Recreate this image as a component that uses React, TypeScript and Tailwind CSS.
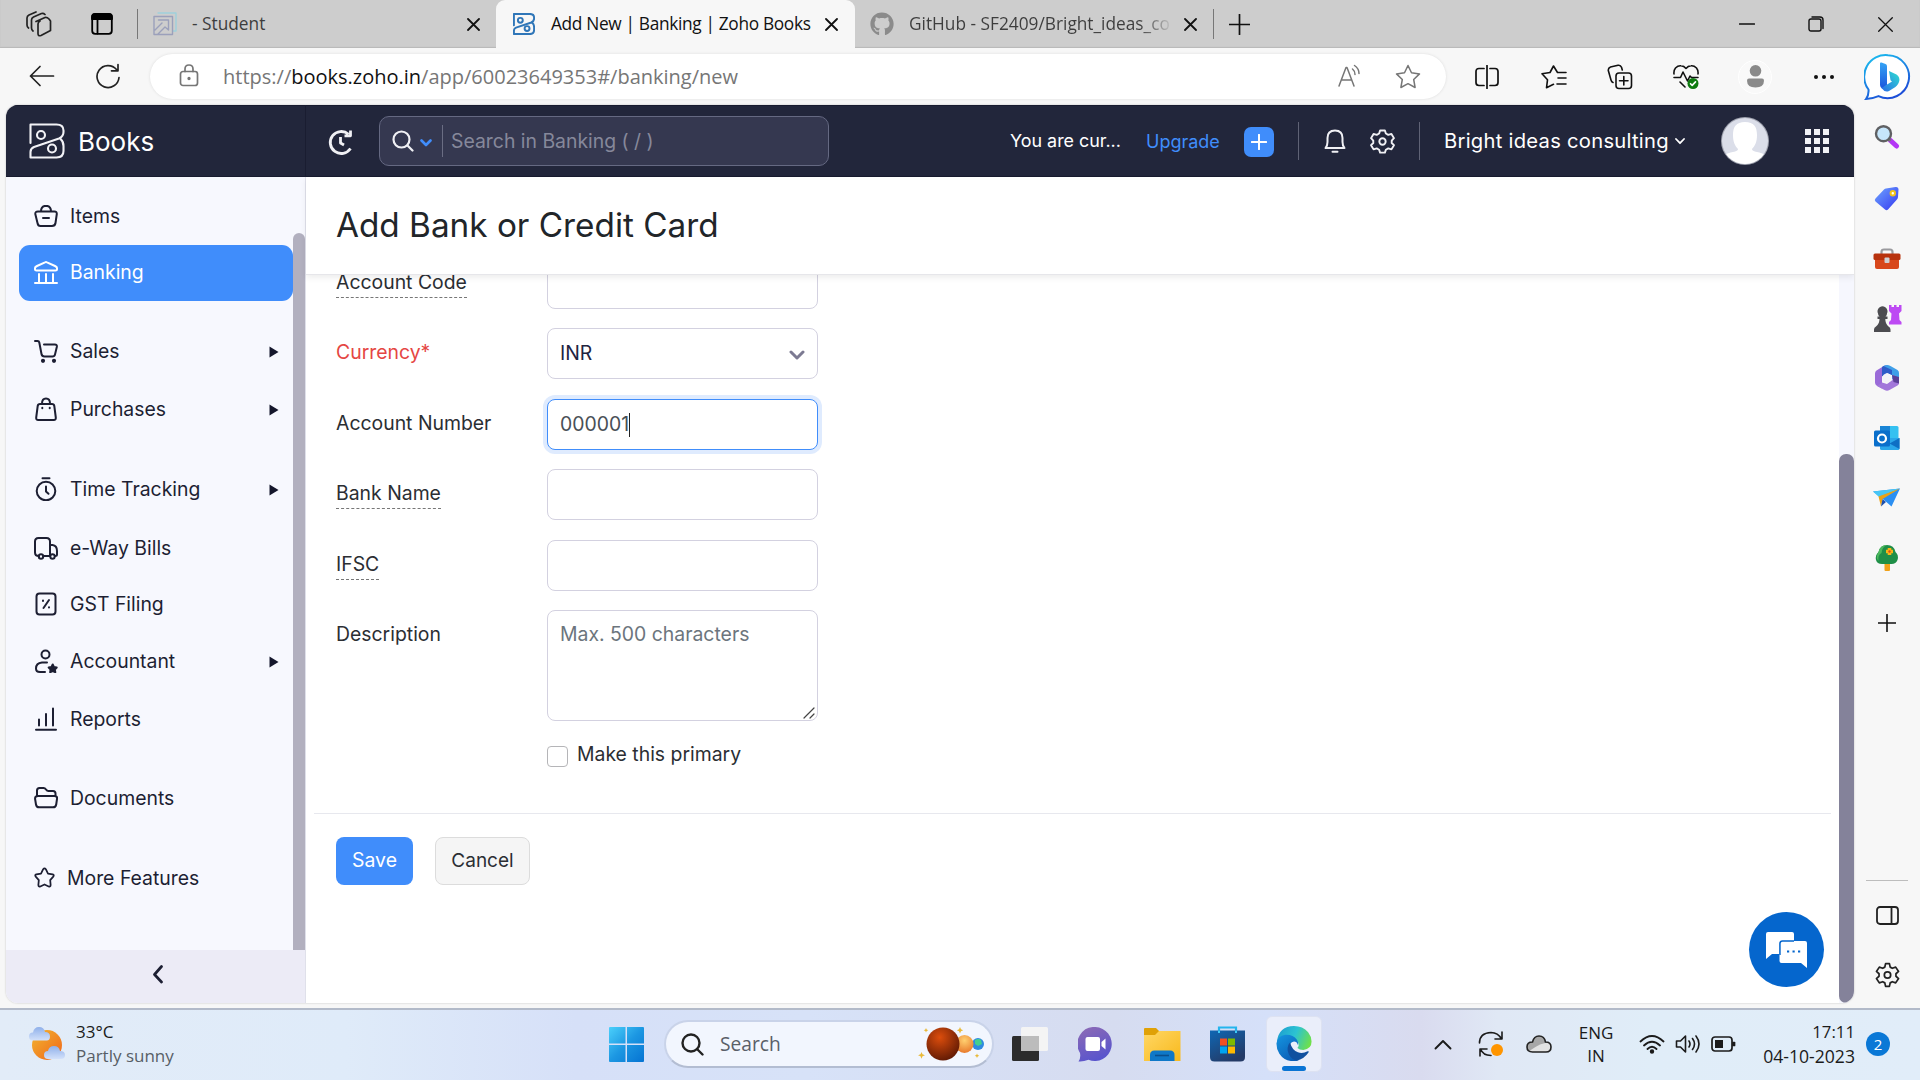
import React from "react";
import { FaGithub } from "react-icons/fa";

type Kids = { children?: React.ReactNode };

/** Stroke icon on a free view box. */
function Ic({
  w,
  h = w,
  vb,
  sw = 1.8,
  className = "",
  children,
}: Kids & { w: number; h?: number; vb?: string; sw?: number; className?: string }) {
  return (
    <svg
      width={w}
      height={h}
      viewBox={vb ?? `0 0 ${w} ${h}`}
      fill="none"
      stroke="currentColor"
      strokeWidth={sw}
      strokeLinecap="round"
      strokeLinejoin="round"
      className={"block shrink-0 " + className}
    >
      {children}
    </svg>
  );
}

function BooksLogo({ size, sw }: { size: number; sw: number }) {
  return (
    <Ic w={size} vb="0 0 36 36" sw={sw}>
      <path d="M1.5 20V1.5h26q7 0 7 6v1.5q0 4.500-4.500 6.500L5 24q-3.500 1.500-3.500 5v5.500h26q7 0 7-6.500v-5q0-4.500-3-7" />
      <circle cx="12" cy="12" r="4" />
      <circle cx="23" cy="25.500" r="4" />
    </Ic>
  );
}

function CloseX({ className = "" }: { className?: string }) {
  return (
    <Ic w={13} sw={1.8} className={className}>
      <path d="M1 1l11 11M12 1L1 12" />
    </Ic>
  );
}

function TabStrip() {
  return (
    <div className="flex h-12 shrink-0 items-center bg-[#cdcdcd] font-['Open_Sans','Noto_Sans',sans-serif] text-[17.3px] text-[#3d3d3d] shadow-[inset_0_-1px_1px_#b9b9b9]">
      <Ic w={26} className="ml-[26px] text-[#222]" sw={1.7}>
        <path d="M10 10.500l9-4q2-.5 4 1.500l1.500 2v9.500L15 24.500q-3 1-3-2v-9.500q0-2 2-3M7 20q-1.500-1-1.500-3V9q0-2 2-3l8-3.500q2-.5 3.500 1M2.500 17Q1 16 1 14V7q0-2 2-3L10 1" />
      </Ic>
      <Ic w={22} className="ml-[39px] text-black" sw={1.8}>
        <rect x="1.200" y="1.200" width="19.600" height="19.600" rx="3" />
        <path d="M1 6V4q0-3 3-3h14q3 0 3 3v2z" fill="currentColor" />
        <path d="M6.500 7v13.500" />
      </Ic>
      <div className="ml-6 h-[30px] w-px bg-[#777]" />
      <Ic w={24} className="ml-[15px]" sw={1.4}>
        <path d="M5 1h18v18h-3" stroke="#9fd0dc" />
        <path d="M1 4.500h18.500v18H1zM5.500 8h10v10l-3.500-3-7 7M9 11l-7 7" stroke="#9ba0bb" />
      </Ic>
      <span className="ml-[15px] w-[76px] whitespace-nowrap">- Student</span>
      <CloseX className="ml-[199px] text-[#111]" />
      <div className="ml-[16px] flex h-12 w-[359px] items-center rounded-t-[9px] bg-[#f7f7f7] text-[#111]">
        <div className="ml-[17px] text-[#2f76b8]">
          <BooksLogo size={22} sw={3.2} />
        </div>
        <span className="ml-4 w-[262px] whitespace-nowrap tracking-[-0.33px]">
          Add New | Banking | Zoho Books
        </span>
        <CloseX className="ml-[12px]" />
      </div>
      <FaGithub className="ml-[15px] shrink-0 text-[24px] text-[#8b8b8b]" />
      <span className="ml-[15px] w-[262px] overflow-hidden whitespace-nowrap bg-linear-to-r from-[#3d3d3d] from-88% to-[#c4c4c4] bg-clip-text text-transparent">
        GitHub - SF2409/Bright_ideas_co
      </span>
      <CloseX className="ml-[13px] text-[#111]" />
      <div className="ml-[16px] h-[30px] w-px bg-[#777]" />
      <Ic w={21} className="ml-[15px] text-[#111]" sw={1.700}>
        <path d="M10.500 .5v20M.5 10.500h20" />
      </Ic>
      <div className="ml-auto mr-[27px] flex items-center text-[#111]">
        <Ic w={16} sw={1.3}>
          <path d="M.5 8h15" />
        </Ic>
        <Ic w={16} className="ml-[53px]" sw={1.4}>
          <rect x="1" y="3" width="12" height="12" rx="2" />
          <path d="M4 1h8q3 0 3 3v8.500" />
        </Ic>
        <Ic w={15} className="ml-[54px]" sw={1.3}>
          <path d="M.7.7l13.600 13.600M14.300.7L.7 14.300" />
        </Ic>
      </div>
    </div>
  );
}

function Toolbar() {
  return (
    <div className="flex h-[57px] shrink-0 items-center text-[#222]">
      <Ic w={26} h={22} className="-mt-[2px] ml-[29px]" sw={1.7}>
        <path d="M24.500 11H1.500M11 1.500L1.500 11l9.500 9.500" />
      </Ic>
      <Ic w={26} className="-mt-[2px] ml-[40px]" sw={1.7}>
        <path d="M24 14.500A11 11 0 1 1 21.500 6.500M23 1.500v6.300h-6.500" />
      </Ic>
      <div className="ml-[29px] flex h-[45px] w-[1296px] items-center rounded-full bg-white text-[#767676] shadow-[0_0_3px_#dcdcdc]">
        <Ic w={20} h={24} className="-mt-[2px] ml-[29px]" sw={1.7}>
          <rect x="1.500" y="7.500" width="17" height="14" rx="2.500" />
          <path d="M6 7.500V5q0-4 4-4t4 4v2.500" />
          <circle cx="10" cy="14.500" r=".8" fill="currentColor" />
        </Ic>
        <span className="ml-[24px] whitespace-nowrap font-['Open_Sans','Noto_Sans',sans-serif] text-[20px]">
          https://<span className="text-[#111]">books.zoho.in</span>/app/60023649353#/banking/new
        </span>
        <Ic w={24} className="-mt-[2px] ml-auto" sw={1.500}>
          <path d="M1 22L8 3.500h1L16 22M3.500 16h10M14.500 5q2.500 2 2.500 5.500M16.500 1.500q4.500 3 4.500 8" />
        </Ic>
        <Ic w={26} vb="0 0 26 26" className="ml-[33px] mr-[25px]" sw={1.500}>
          <path d="M13 1.500l3.500 7.300 8 1.100-5.800 5.600 1.400 8L13 19.700l-7.100 3.800 1.400-8L1.500 9.900l8-1.100z" />
        </Ic>
      </div>
      <Ic w={24} className="ml-[29px] text-[#111]" sw={1.700}>
        <path d="M12 .5v23M9 3.500H4q-3 0-3 3v11q0 3 3 3h5M15 3.500h5q3 0 3 3v11q0 3-3 3h-5" />
      </Ic>
      <Ic w={26} h={24} className="ml-[42px] text-[#111]" sw={1.600}>
        <path d="M25 7.500h-8.500L12.500 1 9 7.500l-8 1.300 5.500 6-1 8 7-3.500M17 13h8M16 19h9" />
      </Ic>
      <Ic w={26} className="ml-[40px] text-[#111]" sw={1.600}>
        <rect x="9" y="9" width="15.500" height="15.500" rx="3" />
        <path d="M16.800 12.500v8.500M12.500 16.800H21M6 18.500Q4.500 18 4 16L1.300 6.500Q1 4 3.500 3L11 1.300q2.500-.5 3.500 2L15.300 6" />
      </Ic>
      <Ic w={27} h={26} className="ml-[40px] text-[#111]" sw={1.600}>
        <path d="M1 10q-.5-3.500 1.500-6Q5 1.500 8 1.800 11 2 13 4.500 15 2 18 1.800q3-.3 5.500 2.200 2 2.500 1.500 6M1 13.500h6.500L10 8l4.500 9 2.500-5 1.500 1.500H25M7 18l5 5" />
        <circle cx="20" cy="19.500" r="5.500" fill="#0f7b10" stroke="none" />
        <path d="M17.500 19.700l1.700 1.700 3.300-3.500" stroke="#fff" />
      </Ic>
      <div className="ml-[38px] flex size-[34px] items-center justify-center rounded-full border border-white bg-[#f9f9f9]">
        <svg width="19" height="23" viewBox="0 0 19 23" fill="#8a8a8a">
          <circle cx="9.500" cy="5.800" r="5.800" />
          <path d="M1 15.500q0-2 2-2h13q2 0 2 2 0 7-8.500 7T1 15.500z" />
        </svg>
      </div>
      <svg width="22" height="6" viewBox="0 0 22 6" className="ml-[41px]" fill="#111">
        <circle cx="3" cy="3" r="2" />
        <circle cx="11" cy="3" r="2" />
        <circle cx="19" cy="3" r="2" />
      </svg>
    </div>
  );
}

function AppHeader() {
  return (
    <div className="flex h-[72px] shrink-0 items-center bg-[#22263b] text-white shadow-[inset_0_-1px_0_#181b2f,inset_0_1px_0_#181b2f]">
      <div className="flex h-full w-[300px] items-center border-r border-[#1a1d31] pl-[23px] text-[#f2f2f6]">
        <BooksLogo size={36} sw={2.1} />
        <span className="ml-[13px] mt-px font-[Inter,sans-serif] text-[26px] text-white">Books</span>
      </div>
      <Ic w={28} className="ml-[21px] mt-px text-[#f0f0f4]" sw={2.8}>
        <path d="M23.500 20.500A11 11 0 1 1 21.500 6.200M23.500 2.500v5.300h-6M13.500 9v6l3.500 2" strokeLinecap="butt" />
      </Ic>
      <div className="ml-[24px] flex h-[50px] w-[450px] items-center rounded-[10px] border border-[#656982] bg-[#353850]">
        <Ic w={22} className="ml-[12px] text-[#f0f0f4]" sw={2.2}>
          <circle cx="9.500" cy="9.500" r="8" />
          <path d="M15.500 15.500l5 5" />
        </Ic>
        <Ic w={12} h={8} className="ml-[6px] mt-[3px] text-[#408dfb]" sw={2.6}>
          <path d="M1.500 1.500L6 6l4.500-4.500" />
        </Ic>
        <div className="ml-[10px] h-8 w-px bg-[#6a6d83]" />
        <span className="ml-[8px] mt-px whitespace-nowrap font-[Inter,sans-serif] text-[19.400px] text-[#86889b]">
          Search in Banking ( / )
        </span>
      </div>
      <span className="ml-[181px] w-[111px] whitespace-nowrap font-[Inter,sans-serif] text-[17.900px]">
        You are cur...
      </span>
      <span className="ml-[25px] w-[74px] font-[Inter,sans-serif] text-[18px] text-[#408dfb]">Upgrade</span>
      <div className="ml-[24px] mt-px flex size-[30px] items-center justify-center rounded-[7px] bg-[#408dfb]">
        <Ic w={16} sw={2}>
          <path d="M8 .8v14.400M.8 8h14.400" />
        </Ic>
      </div>
      <div className="ml-[24px] h-[38px] w-px bg-[#5f6275]" />
      <Ic w={22} h={24} className="ml-[25px] text-[#f0f0f4]" sw={2}>
        <path d="M1.500 19h19Q18.500 16.500 18.500 13V9q0-7.500-7.500-7.500T3.500 9v4q0 3.500-2 6zM8.500 22.800h5" />
      </Ic>
      <Ic w={25} vb="0 0 26 26" className="ml-[24px] text-[#f0f0f4]" sw={2}>
        <path d="M10.500 1.500h5l1 3.200 2.500 1.400 3.300-1 2.600 4.400L22.600 12v2.600l2.300 2.200-2.600 4.400-3.300-1-2.500 1.400-1 3h-5l-1-3L7 20.200l-3.300 1-2.600-4.400 2.300-2.200V12L1.100 9.500l2.600-4.400 3.300 1 2.500-1.400z" />
        <circle cx="13" cy="13" r="3.300" />
      </Ic>
      <div className="ml-[24px] h-[38px] w-px bg-[#5f6275]" />
      <span className="ml-[24px] w-[227px] whitespace-nowrap font-[Inter,sans-serif] text-[20.200px] tracking-[0.27px]">
        Bright ideas consulting
      </span>
      <Ic w={10} h={7} className="ml-[4px]" sw={1.8}>
        <path d="M1 1l4 4.200L9 1" />
      </Ic>
      <svg width="48" height="48" viewBox="0 0 48 48" className="ml-[36px] shrink-0">
        <defs>
          <clipPath id="avatarClip">
            <circle cx="24" cy="24" r="23" />
          </clipPath>
        </defs>
        <circle cx="24" cy="24" r="24" fill="#9fa2ae" />
        <g clipPath="url(#avatarClip)">
          <rect width="48" height="48" fill="#dbdee9" />
          <path d="M24 5c9 0 12 5 12 13 0 7-2 11-5 14 0 4 12 2 14 8l-3 8H6L3 40c2-6 14-4 14-8-3-3-5-7-5-14 0-8 3-13 12-13z" fill="#fff" />
        </g>
      </svg>
      <div className="ml-[36px] grid grid-cols-3 gap-x-[3px] gap-y-[3px]">
        {Array.from({ length: 9 }, (_, i) => (
          <div key={i} className="size-[6px] bg-[#f2f2f6]" />
        ))}
      </div>
    </div>
  );
}

const navIcons: Record<string, React.ReactNode> = {
  Items: (
    <path d="M4 7.500h16.500q2.500 0 2.300 2.500l-1.300 9q-.5 3-3.500 3H6.500Q4 22 3.500 19L1.300 10Q1 7.500 4 7.500zM7 7.500q0-4.500 3.500-5.500h3q3.500 1 3.500 5.500M9 14h6" />
  ),
  Banking: (
    <path d="M1 9.500V8q0-1 2-2l8-3.700q1-.5 2 0L21 6q2 1 2 2v1.500q0 1-1.500 1h-19Q1 10.500 1 9.500zM5 14v8M12 14v8M19 14v8M1 23h22" />
  ),
  Sales: (
    <>
      <path d="M1 2h2.500q1.500 0 1.800 1.500L7.500 15q.5 2.500 3 2.500h8q2 0 2.500-2l1.800-7.500q.5-2.500-2-2.500H10" />
      <circle cx="9" cy="21.800" r="1.100" fill="currentColor" />
      <circle cx="20" cy="21.800" r="1.100" fill="currentColor" />
    </>
  ),
  Purchases: (
    <path d="M6 7h12q2 0 2.300 2l1.500 11.500q.2 2.500-2 2.500H4.200q-2.200 0-2-2.500L3.700 9Q4 7 6 7zM8 6.500Q8 1.500 12 1.500t4 5M8.300 10.800v.4M15.700 10.800v.4" />
  ),
  "Time Tracking": (
    <>
      <circle cx="12" cy="14" r="9.300" />
      <path d="M8.500 1.300h7M12 9.500v5l2.500 2.300" />
    </>
  ),
  "e-Way Bills": (
    <>
      <path d="M5 20q-4 0-4-3.500v-11Q1 2 4.500 2h8Q16 2 16 5.500V20H9M16 9h2.500q4.500.5 4.500 6v3.500q0 1.500-2 1.500" />
      <circle cx="7" cy="20.500" r="2.200" />
      <circle cx="18.500" cy="20.500" r="2.200" />
    </>
  ),
  "GST Filing": (
    <path d="M5.500 1.500h13q3 0 3 3v15q0 3-3 3h-13q-3 0-3-3v-15q0-3 3-3zM15 8l-5.500 8M9 8.500v.4M15 15.200v.4" />
  ),
  Accountant: (
    <>
      <circle cx="11.500" cy="5.500" r="4" />
      <path d="M13 13.500H8q-6 .5-6 6 0 3.500 4 3.500h5" />
      <path
        d="M18.700 15.500l1.300 2.600 2.700.4-1.900 2 .5 2.700-2.600-1.200-2.500 1.200.4-2.700-1.900-2 2.700-.4z"
        fill="currentColor"
      />
    </>
  ),
  Reports: <path d="M5 12.500v6M12 7v11.500M19 1.500v17M2 22.800h20" />,
  Documents: (
    <path d="M3 10V4.500Q3 2 5.500 2h4q1.500 0 2.500 1.500t2.500 1.500H19q2.500 0 2.500 2.500V10M4 10h16.500q3 0 2.500 3l-.8 5.500q-.4 2.800-3.200 2.800H5.200q-2.800 0-3.200-2.800L1.100 13Q.8 10 4 10z" />
  ),
};

const nav: { label: string; gap: string; arrow?: boolean; active?: boolean }[] = [
  { label: "Items", gap: "mt-0" },
  { label: "Banking", gap: "mt-0", active: true },
  { label: "Sales", gap: "mt-[23px]", arrow: true },
  { label: "Purchases", gap: "mt-[2px]", arrow: true },
  { label: "Time Tracking", gap: "mt-[24px]", arrow: true },
  { label: "e-Way Bills", gap: "mt-[3px]" },
  { label: "GST Filing", gap: "mt-0" },
  { label: "Accountant", gap: "mt-px", arrow: true },
  { label: "Reports", gap: "mt-[2px]" },
  { label: "Documents", gap: "mt-[23px]" },
];

function Sidebar() {
  return (
    <div className="flex w-[300px] shrink-0 flex-col border-r border-[#dfe0ea] bg-[#f7f8fe] font-[Inter,sans-serif] text-[19.400px] text-[#1d1f33]">
      <div className="flex h-[773px] shrink-0">
        <div className="flex flex-1 flex-col pl-[13px] pt-[12px]">
          {nav.map((n) => (
            <div
              key={n.label}
              className={
                "flex h-14 shrink-0 items-center rounded-[11px] pl-[15px] pr-[14px] " +
                n.gap +
                (n.active ? " bg-[#408dfb] text-white" : "")
              }
            >
              <Ic w={24} sw={2} className="-mt-[2px]">
                {navIcons[n.label]}
              </Ic>
              <span className="ml-[12px] flex-1 whitespace-nowrap">{n.label}</span>
              {n.arrow && (
                <svg width="10" height="12" viewBox="0 0 10 12" fill="#15172c">
                  <path d="M.5.5L9.500 6 .5 11.500z" />
                </svg>
              )}
            </div>
          ))}
          <div className="mt-6 flex h-14 shrink-0 items-center pl-[15px]">
            <Ic w={21} vb="0 0 24 24" className="-mt-[3px]" sw={2}>
              <path d="M10.500 2.500q1.500-2 3 0L16 7.500l5.300 1q2.200.7.700 2.500l-3.500 4 .5 5.500q0 2.500-2.200 1.700L12 20l-4.800 2.200Q5 23 5 20.500L5.500 15 2 11Q.5 9.200 2.700 8.500l5.300-1z" />
            </Ic>
            <span className="ml-[12px] whitespace-nowrap">More Features</span>
          </div>
        </div>
        <div className="flex w-3 flex-col pt-[56px]">
          <div className="flex-1 rounded-t-[6px] bg-[#b2b0bf]" />
        </div>
      </div>
      <div className="flex flex-1 items-center justify-center bg-[#ecebf6] pb-[4px] pl-[5px]">
        <Ic w={12} h={19} sw={2.7}>
          <path d="M9.500 1.500L2.500 9.500l7 7.500" />
        </Ic>
      </div>
    </div>
  );
}

function Field({
  label,
  gap,
  hint = false,
  required = false,
  tall = false,
  children,
}: Kids & { label: string; gap: string; hint?: boolean; required?: boolean; tall?: boolean }) {
  return (
    <div className={"flex shrink-0 " + gap + (tall ? " h-[111px]" : " h-[51px]")}>
      <div className="w-[211px] pt-[10px]">
        <span
          className={
            "inline-block whitespace-nowrap leading-[29px] " +
            (hint ? "border-b border-dashed border-[#777] " : "") +
            (required ? "text-[#e54643]" : "")
          }
        >
          {label}
        </span>
      </div>
      {children}
    </div>
  );
}

const box = "flex w-[271px] items-center rounded-[8px] border border-[#d3d1e0] bg-white px-[12px]";

function BankForm() {
  return (
    <div className="flex min-w-0 flex-1 flex-col bg-white font-[Inter,sans-serif] text-[19.400px] text-[#2b2e33]">
      <div className="z-10 flex h-[98px] shrink-0 items-center border-b border-[#e6e6ea] bg-white pl-[30px] shadow-[0_3px_6px_rgba(0,0,0,0.07)]">
        <h1 className="whitespace-nowrap text-[33.300px] font-normal text-[#212529]">
          Add Bank or Credit Card
        </h1>
      </div>
      <div className="flex min-h-0 flex-1 overflow-hidden">
        <div className="flex flex-1 flex-col">
          <div className="flex flex-col pl-[30px]">
            <Field label="Account Code" hint gap="-mt-[17px]">
              <div className={box} />
            </Field>
            <Field label="Currency*" required gap="mt-[19px]">
              <div className={box + " justify-between text-[#22243f]"}>
                <span className="mt-px">INR</span>
                <Ic w={16} h={10} sw={3} className="mt-[3px] text-[#7c7a92]">
                  <path d="M2 2l6 6 6-6" />
                </Ic>
              </div>
            </Field>
            <Field label="Account Number" gap="mt-[20px]">
              <div className="flex w-[271px] items-center rounded-[8px] border border-[#408dfb] bg-white px-[12px] text-[#495057] shadow-[0_0_0_4px_#dfebfe]">
                <span>000001</span>
                <span className="h-6 w-px bg-[#222]" />
              </div>
            </Field>
            <Field label="Bank Name" hint gap="mt-[19px]">
              <div className={box} />
            </Field>
            <Field label="IFSC" hint gap="mt-[20px]">
              <div className={box} />
            </Field>
            <Field label="Description" tall gap="mt-[19px]">
              <div className="flex w-[271px] justify-between rounded-[8px] border border-[#d3d1e0] pl-[12px] pr-[2px] pt-[9px] text-[#6c757d]">
                <span className="whitespace-nowrap leading-[28px]">Max. 500 characters</span>
                <Ic w={12} className="mb-[1px] self-end text-[#444]" sw={1.200}>
                  <path d="M1 11L11 1M7 11l4-4" />
                </Ic>
              </div>
            </Field>
            <div className="mt-[25px] flex h-[21px] items-center pl-[211px]">
              <div className="size-[21px] rounded-[4px] border border-[#b5b5b8] bg-white" />
              <span className="-mt-[3px] ml-[9px] whitespace-nowrap">Make this primary</span>
            </div>
          </div>
          <div className="ml-2 mr-2 mt-[46px] h-px bg-[#e7e8ee]" />
          <div className="mt-[23px] flex gap-[22px] pl-[30px]">
            <button className="h-12 w-[77px] rounded-[8px] bg-[#408dfb] text-white">Save</button>
            <button className="h-12 w-[95px] rounded-[8px] border border-[#dcdcdc] bg-[#f5f5f5] text-[19px]">
              Cancel
            </button>
          </div>
          <div className="mr-[15px] mt-[27px] flex size-[75px] items-center justify-center self-end rounded-full bg-[#0566cd]">
            <svg width="42" height="38" viewBox="0 0 42 38">
              <path d="M2 1h24q2 0 2 2v8H15q-2 0-2 2v10H6l-6 5V3q0-2 2-2z" fill="#fff" />
              <path d="M15.500 10H39q2 0 2 2v25l-6-5H15.500q-2 0-2-2V12q0-2 2-2z" fill="#fff" />
              <path d="M14 24V12.500q0-2.500 2.500-2.500H28" stroke="#0566cd" strokeWidth="1.400" fill="none" />
              <path d="M21 20.500h2.200M26.500 20.500h2.200M32 20.500h2.200" stroke="#0566cd" strokeWidth="2.200" />
            </svg>
          </div>
        </div>
        <div className="flex w-[15px] flex-col bg-[#f6f7fe] pt-[179px]">
          <div className="flex-1 rounded-[7px] bg-[#84829a]" />
        </div>
      </div>
    </div>
  );
}

function BingLogo() {
  return (
    <svg width="47" height="48" viewBox="0 0 47 48" className="ml-px mt-[6px] shrink-0">
      <defs>
        <linearGradient id="bingRing" x1="0" y1="0" x2=".5" y2="1">
          <stop offset="0" stopColor="#1bc4f0" />
          <stop offset="1" stopColor="#1c4fd8" />
        </linearGradient>
        <linearGradient id="bingB" x1="0" y1="0" x2="0" y2="1">
          <stop offset="0" stopColor="#35a4f5" />
          <stop offset="1" stopColor="#1a53dc" />
        </linearGradient>
        <linearGradient id="bingC" x1="0" y1="1" x2="1" y2="0">
          <stop offset="0" stopColor="#2a6be8" />
          <stop offset="1" stopColor="#2ee0d0" />
        </linearGradient>
      </defs>
      <path d="M24 1.200a21.500 21.500 0 1 1-9.500 41Q8 45 2 45q3-4 2.500-9.500A21.500 21.500 0 0 1 24 1.200z" fill="#fff" stroke="url(#bingRing)" strokeWidth="2" />
      <path d="M16 9.500q0-1.500 1.500-1l4 1.500q1.500.6 1.500 2.200v18.500L18.500 35q-2.500-1.500-2.500-4z" fill="url(#bingB)" />
      <path d="M25 17l7.500 3.500Q36.500 23 35 28q-1.500 4-6 6.500l-4 2.500q-4 2-7.500-3L28 27.500l-1.500-1.300z" fill="url(#bingC)" />
    </svg>
  );
}

function EdgeRail() {
  return (
    <div className="flex w-[66px] shrink-0 flex-col items-center">
      <BingLogo />
      <svg width="26" height="24" viewBox="0 0 26 24" className="mt-[23px] shrink-0">
        <path d="M16.500 15.500l6 5.500" stroke="#b437f5" strokeWidth="5" strokeLinecap="round" />
        <path d="M14 13.500l2.500 2.300" stroke="#777" strokeWidth="3" />
        <circle cx="9.500" cy="8.700" r="7.500" fill="#c6e6fb" stroke="#5f6063" strokeWidth="2.400" />
      </svg>
      <svg width="26" height="26" viewBox="0 0 26 26" className="mt-[37px] shrink-0">
        <defs>
          <linearGradient id="tag" x1="0" y1="0" x2="1" y2="1">
            <stop offset="0" stopColor="#6fa6ff" />
            <stop offset="1" stopColor="#3437f0" />
          </linearGradient>
        </defs>
        <path d="M12 2.500l9.500-1.500q3-.3 3 2.500L24 11q0 1.500-1.500 3L14 23.500q-1.500 1.500-3 0L1.500 15.500q-1.500-1.500 0-3l8.500-9q1-1 2-1z" fill="url(#tag)" />
        <circle cx="18.800" cy="7.200" r="2.200" fill="#fff" stroke="#f3c318" strokeWidth="2" />
      </svg>
      <svg width="28" height="22" viewBox="0 0 28 22" className="mt-[36px] shrink-0">
        <path d="M8.500 7V4q0-2.500 2.500-2.500h6q2.500 0 2.500 2.500v3" fill="none" stroke="#9a9a9e" strokeWidth="2.200" />
        <rect x="2" y="7" width="24" height="14" rx="2" fill="#d8481c" />
        <rect x=".5" y="5.500" width="27" height="6.500" rx="1.500" fill="#b8320d" />
        <rect x="11.500" y="9.500" width="5" height="5.500" rx="1" fill="#cfd0d4" />
      </svg>
      <svg width="30" height="29" viewBox="0 0 30 29" className="mt-[34px] shrink-0">
        <path d="M17 1h2.500v2H22V1h2.500v2H27V1h2.500v6l-2.500 2.500.5 6.500 2 2v2.500H17V18l2-2 .5-6.500L17 7z" fill="#bd4af3" />
        <path d="M6 9.500a5 5 0 1 1 9 0q0 2-1.500 3h2v2.500h-2.200q0 5 3.200 7.500 2 1 2 3v2.500H2V25.500q0-2 2-3Q7.500 20 7.500 15H5.500v-2.500h2Q6 11.500 6 9.500z" fill="#4c4c50" />
      </svg>
      <svg width="26" height="28" viewBox="0 0 26 28" className="mt-[31px] shrink-0">
        <path d="M9 2.500L2.500 6.500Q1 7.500 1 9.500v9q0 2 1.500 3L8 24.500V10L14 7V1.500q-2.500-1-5 1z" fill="#9a6bd8" />
        <path d="M9.500 2Q13 0 16.500 2l7 4q1.500 1 1.500 3v9.500L18 15v-4L9 6.500z" fill="#3f9fe8" />
        <path d="M9.500 2L8 3v9.500L13 9l5 2V6z" fill="#2e5cc8" />
        <path d="M25 17v2q0 1.500-1.500 2.500l-8 4.500Q13 27.500 10.500 26L3 22l5-3.500 5 1.500 5.500-4 .5-5.500z" fill="#a277da" />
        <path d="M18 11l7 2v6.500l-5.500-1.500z" fill="#5b3f98" />
        <circle cx="13" cy="14" r="4.600" fill="#f3f3f7" />
      </svg>
      <svg width="26" height="24" viewBox="0 0 26 24" className="mt-[34px] shrink-0">
        <rect x="6" y="0" width="18.500" height="13" rx="1.500" fill="#35c1f1" />
        <rect x="6" y="0" width="10" height="7" fill="#1a85d6" />
        <path d="M6 12h19.500v10.500q0 1.500-1.500 1.500H7.500Q6 24 6 22.500z" fill="#2aa7ea" />
        <path d="M25.500 12v11L15.500 17.500z" fill="#0e6fc4" />
        <rect x="0" y="4.500" width="16" height="16" rx="1.500" fill="#0a6fcb" />
        <circle cx="8" cy="12.500" r="4" fill="none" stroke="#fff" strokeWidth="2.200" />
      </svg>
      <svg width="28" height="20" viewBox="0 0 28 20" className="mt-[38px] shrink-0">
        <path d="M0 3.500L27 .5 18.500 18.500l-8-7z" fill="#2b8ff2" />
        <path d="M0 3.500L27 .5 6 9z" fill="#48c6f5" />
        <path d="M27 .5L9.500 11 8 18.500 5.500 8.500z" fill="#eba217" />
        <path d="M9.500 11l3.500 3-5 4.500z" fill="#1c4fae" />
      </svg>
      <svg width="24" height="28" viewBox="0 0 24 28" className="mt-[36px] shrink-0">
        <rect x="9.500" y="18" width="5.500" height="9" rx="1" fill="#f0a21a" />
        <path d="M12 1q7 0 8.500 7 3.500 3 2 8-1.500 4-6 4H7q-5 0-6-4-1-5 2.500-8Q5 1 12 1z" fill="#1f8f48" />
        <path d="M12 1Q7 3 6.500 9q-4 2-3 8Q0 14 3.500 8 5 1 12 1z" fill="#4cb85c" />
        <path d="M14.500 4v7M11 7.500h7" stroke="#f8b417" strokeWidth="3.600" />
        <circle cx="14.500" cy="7.500" r="1.200" fill="#d8501c" />
      </svg>
      <Ic w={18} className="mt-[42px] text-[#111]" sw={1.600}>
        <path d="M9 .5v17M.5 9h17" />
      </Ic>
      <div className="mt-[248px] h-px w-[42px] bg-[#bdbdbd]" />
      <Ic w={23} h={19} className="mt-[25px] text-[#222]" sw={1.800}>
        <rect x="1" y="1" width="21" height="17" rx="3" />
        <path d="M15.500 1v17" />
      </Ic>
      <Ic w={25} h={26} vb="0 0 26 26" className="mt-[37px] text-[#222]" sw={1.800}>
        <path d="M11 1.200h4l.8 3.600 2.200 1.200 3.500-1.200 3 4.500-2.700 2.400v2.600l2.700 2.400-3 4.500-3.500-1.200-2.200 1.200-.8 3.600h-4l-.8-3.600L8 20l-3.500 1.200-3-4.500 2.700-2.400v-2.600L1.500 9.300l3-4.500L8 6l2.200-1.200z" />
        <circle cx="13" cy="13" r="3.300" />
      </Ic>
    </div>
  );
}

function EdgeLogo() {
  return (
    <svg width="36" height="36" viewBox="0 0 36 36">
      <defs>
        <linearGradient id="edgeTop" x1="0" y1=".3" x2="1" y2=".6">
          <stop offset="0" stopColor="#1d9fd0" />
          <stop offset=".5" stopColor="#2cc3d2" />
          <stop offset="1" stopColor="#6fe04a" />
        </linearGradient>
        <linearGradient id="edgeLeft" x1="0" y1="0" x2=".6" y2="1">
          <stop offset="0" stopColor="#1596e0" />
          <stop offset="1" stopColor="#0b5fb8" />
        </linearGradient>
      </defs>
      <path d="M.5 16Q2.500 0 18 0q9 0 14.500 6.500Q36 11 36 16q0 8-8.500 8.500-4 0-6-2 2-2 1-5-2-5-8.500-6Q6 11 .5 16z" fill="url(#edgeTop)" />
      <path d="M0 18q1-8 9-9 8-.5 12 5 2 3 1 5.500-1-3.500-4-3.500-5 1-5 7.500 0 9 10 11.500-3 1-6 1Q8 36 3 28.500 0 24 0 18z" fill="url(#edgeLeft)" />
      <path d="M14 17q-3 3-2.500 8 1.500 8 9 10.700 8-1.700 12.500-8.700.5-1.500-1-1-5 2.500-10 1-6-2-8-10z" fill="#10509f" />
    </svg>
  );
}

function Taskbar() {
  return (
    <div className="flex h-[72px] shrink-0 items-center border-t-2 border-[#b2bac9] bg-[linear-gradient(90deg,#e2ecf8_0%,#dfebf9_18%,#d6e0f8_30%,#d7e2f8_42%,#d6dcf0_58%,#d5e0f9_66%,#d9dbef_74%,#e0e8f5_78%,#e0edf8_86%,#e1edf9_100%)] pb-[2px] font-['Open_Sans','Noto_Sans',sans-serif] text-[17px] text-[#1b1b1b]">
      <svg width="38" height="36" viewBox="0 0 38 36" className="ml-[28px] shrink-0">
        <defs>
          <linearGradient id="sun" x1="0" y1="0" x2="1" y2="1">
            <stop offset="0" stopColor="#f2b630" />
            <stop offset="1" stopColor="#f0641a" />
          </linearGradient>
          <linearGradient id="cloud" x1="0" y1="0" x2="0" y2="1">
            <stop offset="0" stopColor="#8fb0ea" />
            <stop offset="1" stopColor="#d3e1fa" />
          </linearGradient>
        </defs>
        <circle cx="19" cy="19" r="15" fill="url(#sun)" />
        <path d="M5 14.500q-4 0-4-4t4-4Q6 1 11 1t6 5q5 0 5 4.500t-4 4z" fill="url(#cloud)" />
        <path d="M20 33q-4 0-4-4t4-4q1-5 6-5t6 5q5 0 5 4t-4 4z" fill="url(#cloud)" />
      </svg>
      <div className="ml-[10px] flex w-[104px] flex-col whitespace-nowrap leading-6">
        <span>33°C</span>
        <span className="text-[#585e66]">Partly sunny</span>
      </div>
      <svg width="35" height="35" viewBox="0 0 35 35" className="ml-[429px] shrink-0">
        <defs>
          <linearGradient id="win" x1="0" y1="0" x2="1" y2="1">
            <stop offset="0" stopColor="#4bd0fb" />
            <stop offset=".5" stopColor="#1c97e2" />
            <stop offset="1" stopColor="#0573d2" />
          </linearGradient>
        </defs>
        <path d="M1 0h15.500v16.500H0V1q0-1 1-1zM18 0h16q1 0 1 1v15.500H18zM0 18h16.500v17H1q-1 0-1-1zM18 18h17v16q0 1-1 1H18z" fill="url(#win)" />
      </svg>
      <div className="ml-[20px] flex h-[48px] w-[330px] items-center rounded-full border-2 border-b-[#b3bdd2] border-[#c9d3e9] bg-[#f2f6fe]">
        <Ic w={23} className="ml-[15px] text-[#222]" sw={2.400}>
          <circle cx="10" cy="10" r="8.500" />
          <path d="M16 16l5.500 5.500" />
        </Ic>
        <span className="ml-[16px] text-[19.200px] text-[#5a5f68]">Search</span>
        <svg width="67" height="36" viewBox="0 0 67 36" className="ml-auto mr-[8px]">
          <defs>
            <radialGradient id="mars" cx=".4" cy=".3" r=".75">
              <stop offset="0" stopColor="#dc4d0c" />
              <stop offset="1" stopColor="#5c1804" />
            </radialGradient>
            <radialGradient id="venus" cx=".5" cy=".3" r=".7">
              <stop offset="0" stopColor="#ffd070" />
              <stop offset="1" stopColor="#e87a2c" />
            </radialGradient>
          </defs>
          <circle cx="61" cy="18" r="6" fill="#2e8ae0" />
          <path d="M58 14q4-2 6 0l1 4-4 2-3-2z" fill="#43cf8e" />
          <circle cx="47.500" cy="18" r="9" fill="url(#venus)" />
          <circle cx="26" cy="18" r="16.500" fill="url(#mars)" />
          <path d="M43 1l1 2.200 2.200 1-2.200 1L43 7.400l-1-2.200-2.200-1 2.200-1zM4.500 26l1 2.200 2.500 1-2.500 1-1 2.500-1-2.500L1 29.200l2.500-1zM9 2l.7 1.600 1.600.7-1.600.7L9 6.600 8.300 5l-1.600-.7 1.600-.7zM60 27.500l.7 1.600 1.600.7-1.600.7-.7 1.600-.7-1.600-1.600-.7 1.600-.7z" fill="#e9ba3a" />
        </svg>
      </div>
      <svg width="36" height="36" viewBox="0 0 36 36" className="ml-[18px] shrink-0">
        <rect x="0" y="10" width="27" height="25" rx="1.500" fill="#2c2c2c" />
        <rect x="9" y="1" width="27" height="24" rx="1.500" fill="#f4f4f4" />
        <path d="M9 10h18v15H9z" fill="#bcbcbc" />
      </svg>
      <svg width="35" height="35" viewBox="0 0 35 35" className="ml-[30px] shrink-0">
        <defs>
          <linearGradient id="chat" x1="0" y1="0" x2=".4" y2="1">
            <stop offset="0" stopColor="#8f6bb4" />
            <stop offset="1" stopColor="#5a55cc" />
          </linearGradient>
        </defs>
        <path d="M17.500 0a17 17 0 1 1-7 32.800Q5 35 .5 34.500 3 31 2 26A17 17 0 0 1 17.500 0z" fill="url(#chat)" />
        <rect x="7.500" y="10" width="14.500" height="14" rx="2" fill="#fff" />
        <path d="M23.500 15l4-3.500v11l-4-3.500z" fill="#fff" />
      </svg>
      <svg width="37" height="35" viewBox="0 0 37 35" className="ml-[31px] shrink-0">
        <defs>
          <linearGradient id="folder" x1="0" y1="0" x2="1" y2="1">
            <stop offset="0" stopColor="#ffd765" />
            <stop offset="1" stopColor="#f8b91c" />
          </linearGradient>
        </defs>
        <path d="M0 2q0-1 1-1h11l4 4v4H0z" fill="#e0a106" />
        <path d="M0 8h11l4-4h21.500V34H0z" fill="url(#folder)" />
        <path d="M6 34v-6q0-4.500 4.500-4.500H26q4.500 0 4.500 4.500v6z" fill="#0f78c8" />
        <path d="M11 28.500h14" stroke="#0a4f8e" strokeWidth="1.600" />
      </svg>
      <svg width="35" height="36" viewBox="0 0 35 36" className="ml-[29px] shrink-0">
        <defs>
          <linearGradient id="store" x1="0" y1="0" x2=".6" y2="1">
            <stop offset="0" stopColor="#0f67b4" />
            <stop offset="1" stopColor="#243a66" />
          </linearGradient>
        </defs>
        <path d="M9 8V1.500h17V8" fill="none" stroke="#25b5ee" strokeWidth="2.200" />
        <path d="M0 4.500h35V31q0 4.500-4.500 4.500h-26Q0 35.500 0 31z" fill="url(#store)" />
        <path d="M9 4.500V7M26 4.500V7" stroke="#3ccaf7" strokeWidth="2" />
        <path d="M10 12.500h7v7h-7z" fill="#f25022" />
        <path d="M18 12.500h7v7h-7z" fill="#7fba00" />
        <path d="M10 20.500h7v7h-7z" fill="#00a4ef" />
        <path d="M18 20.500h7v7h-7z" fill="#ffb900" />
      </svg>
      <div className="ml-[21px] flex h-14 w-[56px] shrink-0 flex-col items-center rounded-[6px] border border-[#dde2f2] bg-[#eaeefa] pt-[9px]">
        <EdgeLogo />
        <div className="mt-[5px] h-[5px] w-6 rounded-full bg-[#0a74d4]" />
      </div>
      <Ic w={18} h={11} className="ml-[112px]" sw={1.900}>
        <path d="M1.500 9.500L9 2l7.500 7.500" />
      </Ic>
      <Ic w={26} className="ml-[26px]" sw={1.600}>
        <path d="M1.500 12Q1.500 2 13 1.500q7 0 10.500 6.500M24 1v7h-7M2 25v-7h7M2.500 18Q5 24.500 13 24.500" />
        <circle cx="19" cy="19" r="6" fill="#ff9500" stroke="none" />
      </Ic>
      <svg width="26" height="18" viewBox="0 0 26 18" className="ml-[22px] shrink-0">
        <path d="M6.500 17q-5.500 0-5.500-5t5.500-5Q8 1 13 1q5.500 0 6.500 6 5.500 0 5.500 5t-5 5z" fill="#a7a7a7" />
        <path d="M4 15.500Q9 12 14 9.500l7-2q4 1 4 4.500 0 5-5 5H6.500z" fill="#e2e2e2" />
        <path d="M6.500 17q-5.500 0-5.500-5t5.500-5Q8 1 13 1q5.500 0 6.500 6 5.500 0 5.500 5t-5 5z" fill="none" stroke="#222" strokeWidth="1.600" />
      </svg>
      <div className="ml-[25px] flex w-[38px] flex-col items-center leading-[23px]">
        <span>ENG</span>
        <span>IN</span>
      </div>
      <Ic w={26} h={20} className="ml-[24px]" sw={1.800}>
        <path d="M1.500 7.500q11.500-11 23 0M5 11.500q8-7.500 16 0M8.500 15q4.500-4.500 9 0" />
        <circle cx="13" cy="17.500" r="1.300" fill="currentColor" />
      </Ic>
      <Ic w={26} h={20} className="ml-[10px]" sw={1.600}>
        <path d="M1.500 7h4l5-5v16l-5-5h-4zM14 7q2 3 0 6M17.500 4.500q4 5.500 0 11M21 2q6 8 0 16" />
      </Ic>
      <Ic w={25} h={18} className="ml-[10px]" sw={1.700}>
        <rect x="1" y="2" width="20" height="14" rx="3" />
        <rect x="4" y="5" width="8" height="8" fill="currentColor" stroke="none" />
        <path d="M22 7.500h1.500v3H22z" fill="currentColor" />
      </Ic>
      <div className="ml-auto flex flex-col items-end whitespace-nowrap text-[17.600px] leading-6">
        <span className="text-[16.800px]">17:11</span>
        <span>04-10-2023</span>
      </div>
      <div className="ml-[11px] mr-[30px] flex size-6 items-center justify-center rounded-full bg-[#0a78d6] text-[15px] text-white">
        2
      </div>
    </div>
  );
}

export default function App() {
  return (
    <div className="flex h-[1080px] w-[1920px] flex-col overflow-hidden bg-[#f7f7f7]">
      <TabStrip />
      <div className="flex h-[960px] shrink-0">
        <div className="flex w-[1854px] shrink-0 flex-col">
          <Toolbar />
          <div className="ml-[6px] flex h-[898px] flex-col overflow-hidden rounded-[12px] shadow-[0_0_2px_#bbb]">
            <AppHeader />
            <div className="flex min-h-0 flex-1">
              <Sidebar />
              <BankForm />
            </div>
          </div>
        </div>
        <EdgeRail />
      </div>
      <Taskbar />
    </div>
  );
}
